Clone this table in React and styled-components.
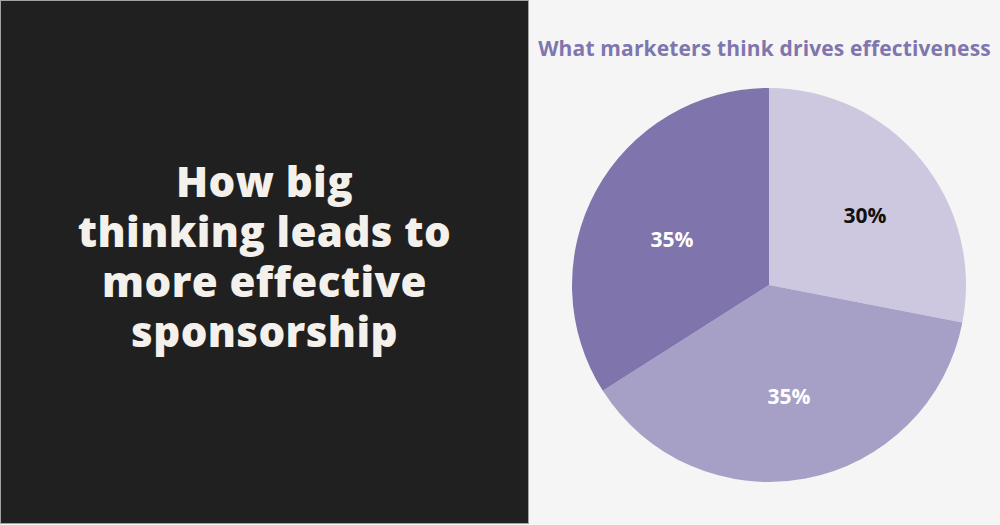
import React from 'react';
import styled, { createGlobalStyle } from 'styled-components';

const GlobalStyle = createGlobalStyle`
  html, body {
    margin: 0;
    padding: 0;
    background: #f5f5f5;
  }
  body {
    font-family: 'Open Sans', 'Liberation Sans', sans-serif;
  }
`;

const Page = styled.div`
  display: flex;
  width: 1000px;
  height: 525px;
  overflow: hidden;
  background: #f5f5f5;
`;

const Hero = styled.section`
  box-sizing: border-box;
  width: 529px;
  height: 524px;
  flex-shrink: 0;
  display: flex;
  align-items: center;
  justify-content: center;
  background: #202020;
  border: 1px solid #a3a3a3;
  padding-bottom: 12px;
`;

const HeroTitle = styled.h1`
  margin: 0;
  color: #f4f1ec;
  font-family: 'Open Sans', sans-serif;
  font-weight: 800;
  font-size: 42px;
  line-height: 50px;
  text-align: center;
  letter-spacing: 0.4px;
`;

const ChartPanel = styled.section`
  flex: 1;
  display: flex;
  flex-direction: column;
  align-items: center;
  padding-top: 34px;
`;

const ChartTitle = styled.h2`
  margin: 0;
  color: #7f76ae;
  font-family: 'Open Sans', sans-serif;
  font-weight: 700;
  font-size: 21px;
  line-height: 28px;
  letter-spacing: 0.15px;
`;

const PieWrap = styled.div`
  margin-top: 23px;
  margin-left: 9px;
  width: 400px;
  height: 400px;
`;

const Label = styled.text`
  font-family: 'Open Sans', sans-serif;
  font-weight: 700;
  font-size: 21px;
  fill: ${({ dark }) => (dark ? '#111111' : '#ffffff')};
`;

const R = 197;
const C = 200;

const slices = [
  { from: 0, to: 101, color: '#cdc8df', label: '30%', x: 296, y: 130, dark: true },
  { from: 101, to: 237.5, color: '#a6a0c7', label: '35%', x: 220, y: 311 },
  { from: 237.5, to: 360, color: '#7f75ac', label: '35%', x: 103, y: 154 },
];

const point = (deg) => {
  const a = (deg * Math.PI) / 180;
  return [C + R * Math.sin(a), C - R * Math.cos(a)];
};

const slicePath = ({ from, to }) => {
  const [x1, y1] = point(from);
  const [x2, y2] = point(to);
  const large = to - from > 180 ? 1 : 0;
  return `M${C} ${C} L${x1} ${y1} A${R} ${R} 0 ${large} 1 ${x2} ${y2} Z`;
};

const PieChart = () => (
  <PieWrap>
    <svg width="400" height="400" viewBox="0 0 400 400">
      {slices.map((s, i) => (
        <path key={i} d={slicePath(s)} fill={s.color} />
      ))}
      {slices.map((s, i) => (
        <Label
          key={`l${i}`}
          x={s.x}
          y={s.y}
          dark={s.dark ? 1 : 0}
          textAnchor="middle"
          dominantBaseline="central"
        >
          {s.label}
        </Label>
      ))}
    </svg>
  </PieWrap>
);

const App = () => (
  <>
    <GlobalStyle />
    <Page>
      <Hero>
        <HeroTitle>
          How big
          <br />
          thinking leads to
          <br />
          more effective
          <br />
          sponsorship
        </HeroTitle>
      </Hero>
      <ChartPanel>
        <ChartTitle>What marketers think drives effectiveness</ChartTitle>
        <PieChart />
      </ChartPanel>
    </Page>
  </>
);

export default App;
